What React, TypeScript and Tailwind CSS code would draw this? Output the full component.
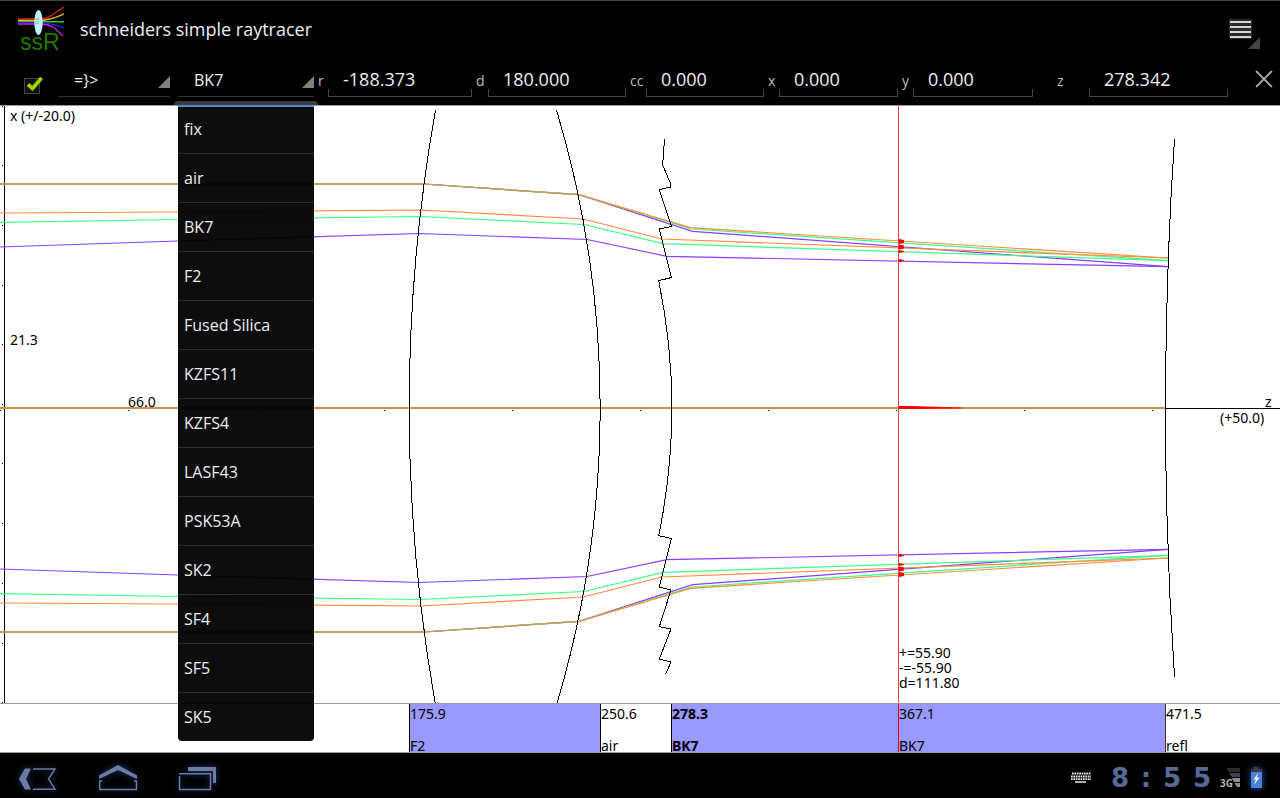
import { useState } from "react";
import clsx from "clsx";

const materials = ["fix", "air", "BK7", "F2", "Fused Silica", "KZFS11", "KZFS4", "LASF43", "PSK53A", "SK2", "SF4", "SF5", "SK5"];

const surfaces = [
  { span: 409, z: "", material: "", style: "" },
  { span: 191, z: "175.9", material: "F2", style: "shadow-[inset_1px_0_0_#000000] bg-[#9999ff]" },
  { span: 71, z: "250.6", material: "air", style: "shadow-[inset_1px_0_0_#000000]" },
  { span: 227, z: "278.3", material: "BK7", style: "shadow-[inset_1px_0_0_#000000] bg-[#9999ff] font-bold" },
  { span: 267, z: "367.1", material: "BK7", style: "shadow-[inset_1px_0_0_#e00000] bg-[#9999ff]" },
  { span: 115, z: "471.5", material: "refl", style: "shadow-[inset_1px_0_0_#333333]" },
];

export default function App() {
  const [material, setMaterial] = useState("BK7");

  return (
    <div className="min-h-screen flex flex-col bg-white font-['Noto_Sans','Open_Sans',sans-serif] text-black">
      <header className="bg-black border-t border-t-[#4a4143] border-b border-b-[#999999] text-[#eeeeee] font-['Open_Sans','Noto_Sans',sans-serif]">
        {/* Title bar */}
        <div className="flex items-center h-[57px] pl-4 pr-[19px]">
          <Logo />
          <h1 className="ml-4 pb-[2px] text-[18px] leading-6">schneiders simple raytracer</h1>
          <button aria-label="Menu" className="ml-auto pt-1">
            <svg width="36" height="36" viewBox="1225 14 36 36" className="block">
              <rect x="1229" y="19" width="23" height="20" fill="#2a2a2a" />
              <path d="M1230 22h21M1230 27h21M1230 32h21M1230 37h21" stroke="#d4d4d4" strokeWidth="2" />
              <path d="M1260 37v12h-12z" fill="#444444" />
            </svg>
          </button>
        </div>

        {/* Surface editor */}
        <div className="grid grid-cols-[58fr_120fr_140fr_10fr_148fr_12fr_142fr_16fr_122fr_11fr_123fr_11fr_144fr_32fr_166fr_25fr] h-[47px] pb-2 items-stretch">
          <div className="relative flex items-end pl-6 pb-[3px] min-w-0">
            <input
              type="checkbox"
              defaultChecked
              aria-label="Surface active"
              className="peer appearance-none size-4 border border-[#444444] bg-[#111111]"
            />
            <svg width="18" height="16" viewBox="0 0 18 16" className="hidden peer-checked:block absolute left-[26px] bottom-[5px] pointer-events-none">
              <path d="M2 8.500 6.500 12.500 15.500 2" fill="none" stroke="#5c8a00" strokeWidth="5" opacity=".5" />
              <path d="M2 8.500 6.500 12.500 15.500 2" fill="none" stroke="#a4d80a" strokeWidth="3.200" />
            </svg>
          </div>
          <div className="min-w-0 pr-2">
            <Spinner label="Surface type" value="=}>" options={["=}>"]} />
          </div>
          <div className="relative min-w-0 pr-1">
            <Spinner label="Material" value={material} options={materials} onChange={setMaterial} />
            <div className="absolute z-10 top-[43px] -left-1 right-0 h-1 rounded-t bg-[#3a3a3a]" />
            <ul
              role="listbox"
              aria-label="Materials"
              className="absolute z-10 top-[47px] left-0 right-1 rounded-b bg-black/95 overflow-hidden shadow-[inset_0_2px_0_#5a86dc]"
            >
              {materials.map((name) => (
                <li key={name} role="option" aria-selected={name === material} className="border-b border-[#2c2c2c] last:border-b-0">
                  <button onClick={() => setMaterial(name)} className="block w-full h-12 pl-[6px] text-left text-[16px]">
                    {name}
                  </button>
                </li>
              ))}
            </ul>
          </div>
          <Field id="r" value="-188.373" />
          <Field id="d" value="180.000" />
          <Field id="cc" value="0.000" />
          <Field id="x" value="0.000" />
          <Field id="y" value="0.000" className="pr-6" />
          <Field id="z" value="278.342" className="pr-[27px]" />
          <button aria-label="Close" className="min-w-0 pt-[3px]">
            <svg width="18" height="18" viewBox="0 0 18 18" className="block">
              <path d="M1 1 17 17M17 1 1 17" stroke="#a8a8a8" strokeWidth="1.800" />
            </svg>
          </button>
        </div>
      </header>

      <RayDiagram />

      {/* Surface positions along z */}
      <div className="flex h-[50px] border-y border-[#999999] text-[14px] leading-4">
        {surfaces.map((s, i) => (
          <div
            key={i}
            style={{ flexGrow: s.span }}
            className={clsx("basis-0 w-0 flex flex-col gap-4 pt-[2px] indent-px", s.style)}
          >
            <span>{s.z}</span>
            <span>{s.material}</span>
          </div>
        ))}
      </div>

      <SystemBar />
    </div>
  );
}

function Spinner({ label, value, options, onChange }: { label: string; value: string; options: string[]; onChange?: (v: string) => void }) {
  return (
    <div className="relative h-full border-b border-[#333333]">
      <select
        aria-label={label}
        value={value}
        onChange={(e) => onChange?.(e.target.value)}
        className="block appearance-none w-full h-full pl-4 pt-[6px] bg-transparent text-[16px] outline-none"
      >
        {options.map((o) => (
          <option key={o} className="bg-black">{o}</option>
        ))}
      </select>
      <svg width="12" height="12" viewBox="0 0 12 12" className="absolute right-0 bottom-2 pointer-events-none">
        <path d="M12 0v12H0z" fill="#808080" />
      </svg>
    </div>
  );
}

function Field({ id, value, className }: { id: string; value: string; className?: string }) {
  return (
    <>
      <label htmlFor={id} className="min-w-0 pt-[11px] text-[14px] leading-6 text-[#bebebe]">{id}</label>
      <div className={clsx("min-w-0", className ?? "pr-1")}>
        <div className="relative h-full">
          <input id={id} defaultValue={value} className="block w-full h-full pl-[15px] pt-[3px] bg-transparent text-[18px] outline-none" />
          <div className="absolute inset-x-0 bottom-0 h-2 border border-t-0 border-[#484848] pointer-events-none" />
        </div>
      </div>
    </>
  );
}

function Logo() {
  return (
    <svg width="48" height="50" viewBox="16 6 48 50" fill="none" role="img" aria-label="ssR">
      <g strokeWidth="1.400">
        <path d="M18 20h22c10 0 15-7 24-12" stroke="#d8200c" />
        <path d="M18 21.400h22c10 0 16-3 24-6.400" stroke="#f0b020" />
        <path d="M18 22.700h46" stroke="#10d820" />
        <path d="M18 23.800h22c10 0 16 2 24 5" stroke="#2418e0" />
        <path d="M18 25h22c11 0 15 4 23 12" stroke="#d020d8" />
      </g>
      <ellipse cx="38.500" cy="23.500" rx="4.200" ry="12.500" fill="#b8f4fc" />
      <path d="M34 20.200h5" stroke="#f09080" />
      <path d="M34 22.700h5" stroke="#60e890" />
      <path d="M34 24.600h5" stroke="#d890f0" />
      <text x="20" y="51" fill="#1f7a00" fontSize="23" className="font-['Liberation_Sans',sans-serif]">ssR</text>
    </svg>
  );
}

// Rays of the upper half; the lower half is the same bundle flipped about the axis.
const rays = [
  { color: "#8a3cff", points: "0,184 424,184 579,194.7 692.7,231.3 1168,266.7" },
  { color: "#3cff8a", points: "0,184 424,184 579,194.7 692,229 1168,260.7" },
  { color: "#ff8a3c", points: "424,184 579,194.7 690,227.7 1168,258" },
  { color: "#ff8a3c", points: "0,213 178,212 422,210 583,219 662,239 1168,258" },
  { color: "#3cff8a", points: "0,222.3 178,219.5 420,216.5 584,224.5 663,243.7 1168,260.7" },
  { color: "#8a3cff", points: "0,247 178,241 419,233.5 587,239.5 667,256.3 1168,266.7" },
  { color: "#b8a068", points: "0,184 424,184 579,194.7" },
];

const hits = [241.5, 247, 251.5, 260.5];

function RayBundle() {
  return (
    <g>
      {rays.map((ray, i) => (
        <polyline key={i} points={ray.points} fill="none" stroke={ray.color} strokeWidth="1.200" />
      ))}
      <path d="M0 184H424" stroke="#c49e5e" strokeWidth="2" />
      {hits.map((y, i) => (
        <path key={y} d={`M899 ${y - (i < 2 ? 2.5 : 1.5)}l5 1v${i < 2 ? 3 : 1}l-5 1z`} fill="#ff0000" />
      ))}
    </g>
  );
}

function RayDiagram() {
  return (
    <svg viewBox="0 106 1280 597" className="block w-full flex-1" role="img" aria-label="Ray diagram">
      {/* Axes and ticks */}
      <g fill="#000000" shapeRendering="crispEdges">
        <rect x="4" y="106" width="1" height="597" />
        <rect x="1166" y="408" width="114" height="1" />
        {[106, 165, 225, 285, 344, 404, 463, 523, 583, 643, 702].map((y) => (
          <rect key={y} x="2" y={y} width="1" height="1" />
        ))}
        {[0, 128, 256, 384, 512, 640, 768, 896, 1024, 1152].map((x) => (
          <rect key={x} x={x} y="410" width="1" height="1" />
        ))}
      </g>

      <RayBundle />
      <g transform="matrix(1 0 0 -1 0 816)">
        <RayBundle />
      </g>
      <path d="M0 408H1166" stroke="#cf9048" strokeWidth="2" />

      {/* Optical surfaces */}
      <g fill="none" stroke="#000000" shapeRendering="crispEdges">
        <path d="M435.500 110A1709 1709 0 0 0 435.500 705" />
        <path d="M556.500 110A1035 1035 0 0 1 556.500 705" />
        <path d="M664.500 139 662.700 165 670.700 184V187L659.300 189.700 671 225V226.500L659.300 229 671.500 277.500 658.700 280.700A630 630 0 0 1 658.700 535.700L671.500 538.500 659.300 587 671 590 659.300 626.700 671 629 659.300 659 671 662 665.700 674" />
        <path d="M1174.500 139A4020 4020 0 0 0 1174.500 677" />
      </g>

      {/* Selected plane */}
      <path d="M898.500 106V703" stroke="#ff3c3c" />
      <path d="M899 406h12l50 1.500v1l-50 .5h-12z" fill="#ff0000" />

      <g fontSize="14">
        <text x="10" y="121">x (+/-20.0)</text>
        <text x="10" y="345">21.3</text>
        <text x="128" y="407">66.0</text>
        <text x="1265" y="407">z</text>
        <text x="1220" y="423">(+50.0)</text>
        <text>
          <tspan x="899" y="658">+=55.90</tspan>
          <tspan x="899" y="673">-=-55.90</tspan>
          <tspan x="899" y="688">d=111.80</tspan>
        </text>
      </g>
    </svg>
  );
}

function SystemBar() {
  return (
    <footer className="flex items-center h-[45px] pt-1 pl-4 pr-[17px] bg-black">
      <div className="flex gap-9">
        <button aria-label="Back">
          <svg width="44" height="32" viewBox="16 762 44 32" className="block drop-shadow-[0_0_3px_#1c3a78]">
            <path d="M25 768.500h6l-5 10.500 5 10.500h-6L19 779z" fill="#6c7ba0" />
            <path d="M33 769h22l-6.500 10 6.500 10.200H33" fill="none" stroke="#6c7ba0" strokeWidth="1.400" />
          </svg>
        </button>
        <button aria-label="Home">
          <svg width="44" height="32" viewBox="96 762 44 32" className="block drop-shadow-[0_0_3px_#1c3a78]">
            <path d="M99 775.500v3.500l19-9 19 9v-3.500l-19-10.500z" fill="#6c7ba0" />
            <path d="M102 781h-2.300v8.500h36.800V781H134" fill="none" stroke="#6c7ba0" strokeWidth="1.400" />
          </svg>
        </button>
        <button aria-label="Recent apps">
          <svg width="44" height="32" viewBox="176 762 44 32" className="block drop-shadow-[0_0_3px_#1c3a78]">
            <path d="M188 767h28v16h-3v-12h-25z" fill="#6c7ba0" />
            <path d="M179 773.700h31.500v15.800h-31V776" fill="none" stroke="#6c7ba0" strokeWidth="1.500" />
          </svg>
        </button>
      </div>

      <svg width="20" height="11" viewBox="0 0 20 11" className="ml-auto" aria-label="Keyboard">
        <path d="M1 1.500h19M0 4.500h20M0 7.200h20" stroke="#e8e8e8" strokeWidth="1.800" strokeDasharray="1.700 .7" />
        <path d="M4 10h11" stroke="#e8e8e8" strokeWidth="1.500" />
      </svg>
      <time className="ml-5 w-[100px] flex justify-between text-[26px] leading-8 font-bold text-[#566a96] font-['DejaVu_Sans',sans-serif]">
        {"8:55".split("").map((c, i) => (
          <span key={i}>{c}</span>
        ))}
      </time>
      <svg width="22" height="24" viewBox="1220 766 22 24" className="ml-2" aria-label="3G signal">
        <path d="M1227 768h14v4h-11z" fill="#2c2c30" />
        <path d="M1230 773h11v4h-8z" fill="#3c4254" />
        <path d="M1233 778h8v4h-6z" fill="#8a8e96" />
        <path d="M1235.500 783h5.500v4h-3z" fill="#8a8e96" />
        <text x="1221" y="787" fontSize="10" fontWeight="bold" fill="#b0b0b0">3G</text>
      </svg>
      <svg width="14" height="24" viewBox="1249 765 14 24" className="ml-2 drop-shadow-[0_0_3px_#2450b0]" aria-label="Battery charging">
        <path d="M1254 766h4v2h4v4h-11v-4h3z" fill="#3c3c40" />
        <rect x="1251" y="771" width="11" height="16" fill="#4a80dc" />
        <path d="M1258.500 771.500l-5 7h2.500l-2 5.500 5.500-7.500h-3z" fill="#ffffff" />
      </svg>
    </footer>
  );
}
